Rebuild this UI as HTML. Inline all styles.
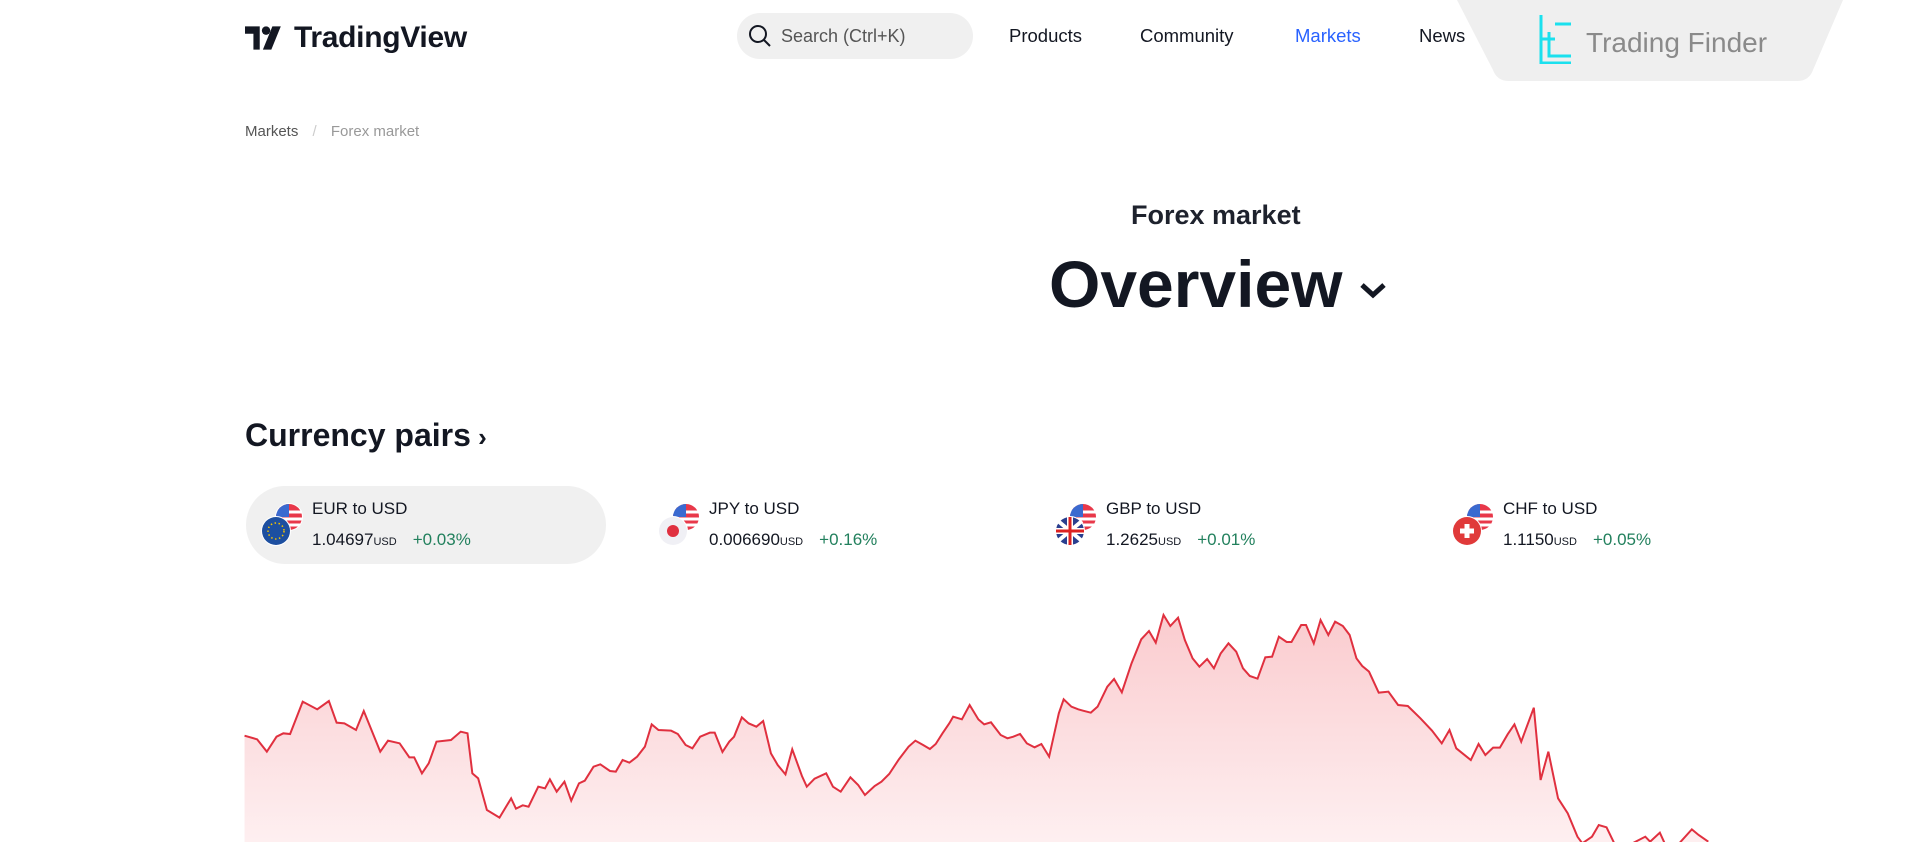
<!DOCTYPE html>
<html><head><meta charset="utf-8"><style>
*{margin:0;padding:0;box-sizing:border-box}
body{width:1920px;height:842px;background:#fff;font-family:"Liberation Sans",sans-serif;color:#131722;position:relative;overflow:hidden}
.a{position:absolute;white-space:nowrap}
.nav{font-size:18.5px;top:25px}
.card .n{font-size:17px}
.card .p{font-size:17px}
.card .u{font-size:11px}
.card .g{font-size:17px;color:#22805d}
</style></head><body>
<div class="a" style="left:245px;top:21px;display:flex;align-items:center">
<svg width="40" height="24" viewBox="0 0 38 22"><path d="M0 0h14v22h-6V7H0z" fill="#131722"/><circle cx="20" cy="4" r="4" fill="#131722"/><path d="M26 0h8l-9 22h-8z" fill="#131722"/></svg>
<span style="font-size:30px;font-weight:bold;margin-left:9px;letter-spacing:-0.3px">TradingView</span></div>
<div class="a" style="left:737px;top:13px;width:236px;height:46px;border-radius:23px;background:#f0f0f0"></div>
<svg class="a" style="left:748px;top:24px" width="24" height="24" viewBox="0 0 24 24"><circle cx="10" cy="10" r="8" fill="none" stroke="#131722" stroke-width="2"/><path d="M16 16l6 6" stroke="#131722" stroke-width="2"/></svg>
<div class="a" style="left:781px;top:26px;font-size:18px;color:#555">Search (Ctrl+K)</div>
<div class="a nav" style="left:1009px">Products</div>
<div class="a nav" style="left:1140px">Community</div>
<div class="a nav" style="left:1295px;color:#2962ff">Markets</div>
<div class="a nav" style="left:1419px">News</div>
<svg class="a" style="left:1457px;top:0" width="386" height="81" viewBox="0 0 386 81"><path d="M0 0H386L356 70Q352 81 340 81H52Q40 81 36 70Z" fill="#efefef"/></svg>
<svg class="a" style="left:1538px;top:14px" width="36" height="50" viewBox="0 0 36 50"><path d="M3 1v48h30M3 25h14M11 18v24h22M17 10h16" fill="none" stroke="#1be0ee" stroke-width="3"/></svg>
<div class="a" style="left:1586px;top:27px;font-size:28px;color:#8a8a8a">Trading Finder</div>
<div class="a" style="left:245px;top:123px;font-size:15px;color:#555">Markets <span style="color:#ccc;margin:0 10px">/</span> <span style="color:#999">Forex market</span></div>
<div class="a" style="left:1131px;top:200px;font-size:27px;font-weight:bold;color:#1e222d">Forex market</div>
<div class="a" style="left:1049px;top:246px;font-size:66px;font-weight:bold;letter-spacing:0px">Overview</div>
<svg class="a" style="left:1358px;top:281px" width="30" height="18" viewBox="0 0 30 18"><path d="M4 4l11 10 11-10" fill="none" stroke="#131722" stroke-width="5"/></svg>
<div class="a" style="left:245px;top:417px;font-size:32px;font-weight:bold">Currency pairs<span style="font-size:26px"> ›</span></div>
<div class="a" style="left:246px;top:486px;width:360px;height:78px;border-radius:39px;background:#f0f0f0"></div>
<div id="cards"></div>
<svg class="a" style="left:230px;top:580px" width="1520" height="262" viewBox="0 0 1568 786" preserveAspectRatio="none">
<defs><linearGradient id="gr" x1="0" y1="0" x2="0" y2="1"><stop offset="0" stop-color="#f7a9ae" stop-opacity=".6"/><stop offset="1" stop-color="#fde6e8" stop-opacity=".6"/></linearGradient></defs>
<path id="ln" fill="url(#gr)" stroke="none" d=""/>
<path id="ln2" fill="none" stroke="#e0303f" stroke-width="2" vector-effect="non-scaling-stroke" d=""/>
</svg>
<script>
var pts=[[15,467],[28,478],[38,515],[48,470],[55,460],[62,462],[75,365],[90,388],[102,363],[110,428],[118,430],[130,450],[138,393],[155,515],[163,482],[175,490],[185,532],[190,532],[198,580],[205,550],[213,485],[228,480],[238,455],[245,460],[250,580],[256,595],[265,690],[278,713],[290,655],[295,686],[302,676],[308,680],[318,620],[325,625],[330,598],[337,635],[345,605],[352,662],[360,610],[366,602],[375,560],[382,553],[392,573],[398,575],[405,540],[412,548],[420,530],[428,500],[435,433],[442,450],[455,452],[462,462],[470,495],[477,505],[485,470],[495,458],[500,458],[508,516],[515,485],[520,470],[528,412],[535,430],[543,440],[550,423],[558,520],[565,555],[573,583],[580,508],[590,588],[595,620],[603,596],[615,580],[622,620],[630,635],[640,592],[648,615],[655,645],[665,618],[672,605],[680,582],[690,538],[700,500],[707,482],[715,495],[722,507],[728,492],[735,460],[742,430],[746,410],[755,418],[763,375],[772,418],[778,433],[785,427],[795,465],[802,475],[808,470],[815,462],[822,490],[830,502],[837,492],[845,530],[855,400],[860,358],[868,380],[875,388],[880,392],[888,398],[895,380],[905,320],[912,297],[920,337],[930,250],[940,178],[948,153],[955,188],[963,105],[970,138],[978,113],[985,180],[993,235],[1000,260],[1008,237],[1015,265],[1022,220],[1030,190],[1038,215],[1045,265],[1052,288],[1060,296],[1068,232],[1075,230],[1082,170],[1090,186],[1095,186],[1105,135],[1110,135],[1118,190],[1125,120],[1133,165],[1140,125],[1148,138],[1155,165],[1162,235],[1168,258],[1175,275],[1185,338],[1195,335],[1205,375],[1215,378],[1228,415],[1240,452],[1250,490],[1258,450],[1265,505],[1280,540],[1288,492],[1295,525],[1303,503],[1310,503],[1318,463],[1325,433],[1332,485],[1345,383],[1352,600],[1360,515],[1370,655],[1380,700],[1390,770],[1395,790],[1405,770],[1412,735],[1420,742],[1428,790],[1440,800],[1460,770],[1465,785],[1475,758],[1480,790],[1495,790],[1508,748],[1515,765],[1525,785]];
var d="M"+pts.map(function(p){return p.join(",")}).join("L");
document.getElementById("ln2").setAttribute("d",d);
document.getElementById("ln").setAttribute("d",d+"L1525,800L15,800Z");
var cards=[["EUR to USD","1.04697","+0.03%","eu"],["JPY to USD","0.006690","+0.16%","jp"],["GBP to USD","1.2625","+0.01%","gb"],["CHF to USD","1.1150","+0.05%","ch"]];
var h="";
cards.forEach(function(c,i){var x=261+i*397;
var f={eu:'<circle cx="14" cy="14" r="14" fill="#1d4fa0"/><circle cx="14" cy="14" r="8" fill="none" stroke="#f5c400" stroke-width="1.5" stroke-dasharray="1.5 2.5"/>',
jp:'<circle cx="14" cy="14" r="14" fill="#f0f0f5"/><circle cx="14" cy="14" r="6" fill="#e03040"/>',
gb:'<circle cx="14" cy="14" r="14" fill="#2a3f8f"/><path d="M2 4L26 24M26 4L2 24" stroke="#fff" stroke-width="4"/><path d="M14 0v28M0 14h28" stroke="#fff" stroke-width="6"/><path d="M14 0v28M0 14h28" stroke="#d22" stroke-width="3"/>',
ch:'<circle cx="14" cy="14" r="14" fill="#e03a3a"/><path d="M14 7v14M7 14h14" stroke="#fff" stroke-width="5"/>'}[c[3]];
h+='<svg class="a" style="left:'+(x+14)+'px;top:503px" width="28" height="28" viewBox="0 0 28 28"><circle cx="14" cy="14" r="14" fill="#fff"/><circle cx="14" cy="14" r="13" fill="#e8384a"/><path d="M1 9h26M1 16h26M3 22h22" stroke="#fff" stroke-width="3"/><path d="M14 1A13 13 0 0 0 1 14H14Z" fill="#3a6ad0"/></svg>';
h+='<svg class="a" style="left:'+x+'px;top:516px" width="30" height="30" viewBox="-1 -1 30 30"><circle cx="14" cy="14" r="15" fill="#fff"/>'+f+'</svg>';
h+='<div class="a card" style="left:'+(x+51)+'px;top:499px"><span class="n">'+c[0]+'</span></div>';
h+='<div class="a card" style="left:'+(x+51)+'px;top:530px"><span class="p">'+c[1]+'</span><span class="u">USD</span><span class="g" style="margin-left:16px">'+c[2]+'</span></div>';
});
document.getElementById("cards").innerHTML=h;
</script>
</body></html>
